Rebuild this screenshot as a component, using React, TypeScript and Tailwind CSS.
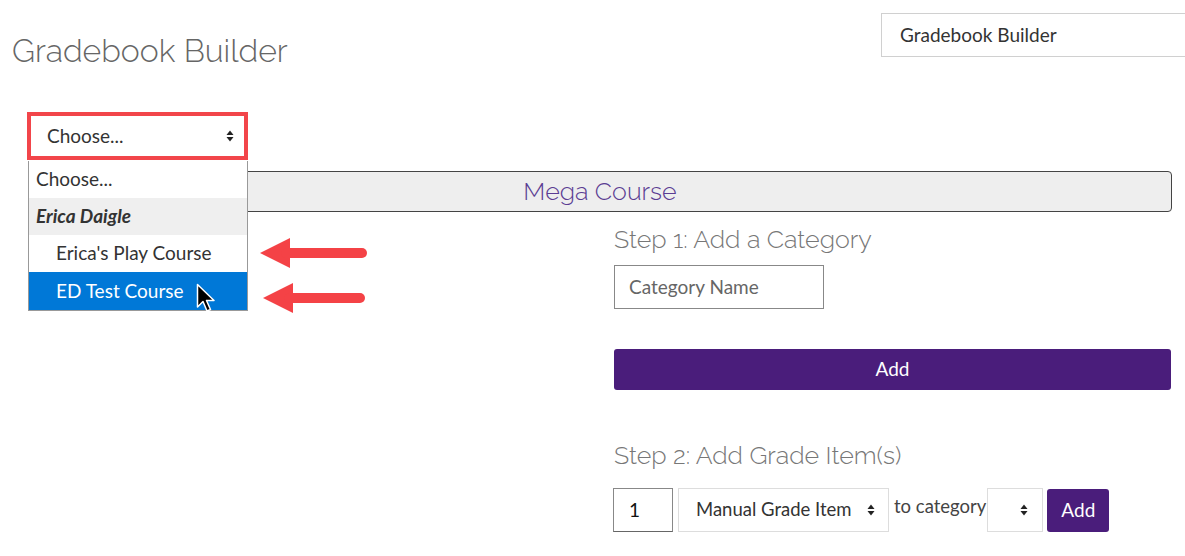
import React from 'react';

const heading = { fontFamily: 'Raleway, Lato, "Open Sans", sans-serif' };
const body = { fontFamily: '"Source Sans Pro", Lato, "Noto Sans", sans-serif' };

function UpDown({ className = '' }: { className?: string }) {
  return (
    <svg width="8" height="12" viewBox="0 0 8 12" className={className}>
      <path d="M4 0.5 L7.5 5 H0.5 Z" fill="#222" />
      <path d="M4 11.5 L7.5 7 H0.5 Z" fill="#222" />
    </svg>
  );
}

function Arrow({ width }: { width: number }) {
  return (
    <svg width={width} height="32" viewBox={`0 0 ${width} 32`}>
      <path d="M0 16 L30 1 L30 31 Z" fill="#f44246" />
      <line x1="26" y1="16" x2={width - 6} y2="16" stroke="#f44246" strokeWidth="10" strokeLinecap="round" />
    </svg>
  );
}

function Cursor() {
  return (
    <svg width="22" height="32" viewBox="0 0 22 32">
      <path
        d="M1.5 1.5 L1.5 24 L7 18.5 L11 28 L14.5 26.5 L10.5 17.5 L18 17.5 Z"
        fill="#000"
        stroke="#fff"
        strokeWidth="1.5"
        strokeLinejoin="round"
      />
    </svg>
  );
}

export default function App() {
  return (
    <div className="relative w-[1185px] h-[556px] overflow-hidden bg-white" style={body}>
      {/* header */}
      <div className="flex">
        <div className="w-[881px] shrink-0 pl-[12px] pt-[31px]">
          <h1 className="text-[32px] leading-[40px] font-light text-[#666]" style={heading}>
            Gradebook Builder
          </h1>
        </div>
        <div className="mt-[13px] w-[330px] h-[44px] shrink-0 border border-[#d0d0d0] flex items-center pl-[18px] text-[19px] text-[#333]">
          Gradebook Builder
        </div>
      </div>

      {/* course select */}
      <div className="relative ml-[27px] mt-[41px] w-[221px] z-10">
        <div className="h-[48px] border-[4px] border-[#f2454a] bg-white flex items-center justify-between pl-[16px] pr-[10px] text-[19px] text-[#333]">
          <span>Choose...</span>
          <UpDown />
        </div>
        <div className="absolute left-[1px] top-[49px] w-[220px] bg-white border border-t-0 border-[#999] text-[19px] text-[#333]">
          <div className="h-[37px] flex items-center pl-[7px]">Choose...</div>
          <div className="h-[37px] flex items-center pl-[7px] bg-[#efefef] font-bold italic">Erica Daigle</div>
          <div className="h-[37px] flex items-center pl-[27px]">Erica's Play Course</div>
          <div className="h-[38px] flex items-center pl-[27px] bg-[#0078d7] text-white">ED Test Course</div>
        </div>
      </div>

      {/* course bar */}
      <div
        className="ml-[28px] mt-[11px] w-[1144px] h-[41px] bg-[#eeeeee] border border-[#444] rounded-[4px] flex items-center justify-center text-[25px] font-light text-[#5b3d93]"
        style={heading}
      >
        Mega Course
      </div>

      {/* steps */}
      <div className="grid grid-cols-[614px_557px] mt-[12px]">
        <div />
        <div>
          <h2 className="text-[25px] leading-[30px] font-light text-[#777]" style={heading}>
            Step 1: Add a Category
          </h2>
          <div className="mt-[11px] w-[210px] h-[44px] border border-[#888] flex items-center pl-[14px] text-[19px] text-[#666]">
            Category Name
          </div>
          <div className="mt-[40px] h-[41px] rounded-[3px] bg-[#4a1d7b] flex items-center justify-center text-[19px] text-white">
            Add
          </div>
          <h2 className="mt-[50px] text-[25px] leading-[30px] font-light text-[#777]" style={heading}>
            Step 2: Add Grade Item(s)
          </h2>
          <div className="mt-[18px] flex items-center">
            <div className="-ml-[1px] w-[60px] h-[44px] border border-[#888] border-b-[#666] flex items-center pl-[15px] text-[19px] text-[#111]">
              1
            </div>
            <div className="ml-[5px] w-[211px] h-[44px] border border-[#ddd] flex items-center justify-between pl-[17px] pr-[13px] text-[18.5px] text-[#333]">
              <span>Manual Grade Item</span>
              <UpDown />
            </div>
            <span className="ml-[5px] -mt-[7px] text-[18.5px] text-[#444]">to category</span>
            <div className="ml-[1px] w-[56px] h-[44px] border border-[#ddd] flex items-center justify-end pr-[14px]">
              <UpDown />
            </div>
            <div className="ml-[4px] w-[62px] h-[43px] rounded-[3px] bg-[#4a1d7b] flex items-center justify-center text-[19px] text-white">
              Add
            </div>
          </div>
        </div>
      </div>

      {/* annotations */}
      <div className="absolute left-[260px] top-[237px]">
        <Arrow width={108} />
      </div>
      <div className="absolute left-[263px] top-[282px]">
        <Arrow width={103} />
      </div>
      <div className="absolute left-[196px] top-[283px] z-20">
        <Cursor />
      </div>
    </div>
  );
}
